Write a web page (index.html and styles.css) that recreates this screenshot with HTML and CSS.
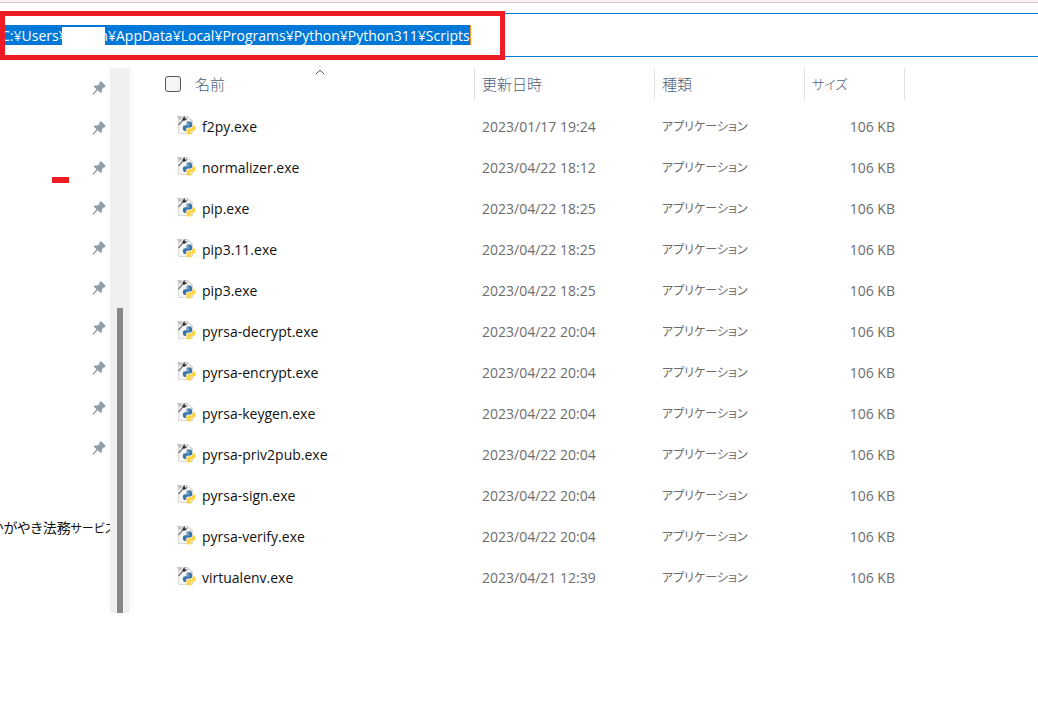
FILE: index.html
```html
<!DOCTYPE html>
<html lang="ja">
<head>
<meta charset="utf-8">
<meta name="viewport" content="width=device-width, initial-scale=1">
<title>Scripts</title>
<link rel="stylesheet" href="styles.css">
</head>
<body>
<svg class="defs" aria-hidden="true">
  <symbol id="pin" viewBox="0 0 14 14">
    <path d="M7.5 1 9 .3 13.7 4.8 13 6.3 11.6 6.4 10 8.3 9.8 11 8.8 12 5.7 9.3 1.7 13.4.6 13.6.8 12.5 4.6 8.2 1.7 5.4 2.7 4.3 5.5 4.4 7.5 2.7Z" fill="#929ea7"/>
  </symbol>
  <symbol id="pyexe" viewBox="0 0 20 20">
    <path d="M2.5 1.5H12L16.5 6V18.5H2.5Z" fill="#f5f5f5" stroke="#dadada"/>
    <path d="M11 1.5V6.5H16.5Z" fill="#fff" stroke="#c5c5c5" stroke-width=".8"/>
    <path d="M1 1H5L7 4 3 5Z" fill="#c4c4c4"/>
    <path d="M2.5 10 8 3.6" stroke="#777" stroke-width="1.3"/>
    <path d="M6.8 5.5C6.3 3.5 7.2 1.7 9.5 1.2L8.6 2.8 9.5 3.7 11 2.7C10.7 4.8 8.6 6.2 6.8 5.5Z" fill="#303030"/>
    <path d="M13 6.5C10.7 6.5 10.5 7.5 10.5 8.5V9.7H13.3V10.2H9.2C7.4 10.2 6.8 11.5 6.8 13.1S7.5 16 9 16H10V14.4C10 13.2 11 12.4 12.1 12.4H14.5C15.5 12.4 16 11.7 16 10.8V8.5C16 7.2 14.8 6.5 13 6.5Z" fill="#3977aa"/>
    <path d="M16.7 10.2V11.6C16.7 12.8 15.8 13.5 14.8 13.5H12.2C11.2 13.5 10.6 14.2 10.6 15.1V17.4C10.6 18.8 11.8 19.4 13.4 19.4S16.2 18.8 16.2 17.4V16.3H13.4V15.8H17.3C18.9 15.8 19.5 14.7 19.5 13S18.9 10.2 17.5 10.2Z" fill="#ffd43b"/>
    <circle cx="12" cy="8.1" r=".6" fill="#fff"/><circle cx="14.7" cy="17.8" r=".6" fill="#fff"/>
  </symbol>
</svg>
<header class="top">
  <div class="address">
    <input class="path" aria-label="アドレス" value="C:¥Users¥&#160;&#160;&#160;&#160;&#160;&#160;&#160;&#160;&#160;n¥AppData¥Local¥Programs¥Python¥Python311¥Scripts">
    <span class="mask"></span>
  </div>
  <span class="highlight"></span>
</header>
<main class="main">
  <nav class="side">
    <ul class="pins" id="pins"></ul>
    <span class="dash"></span>
    <div class="folder"><span>かがやき法務<span class="kana">サービス</span></span></div>
  </nav>
  <div class="track"><div class="thumb"></div></div>
  <section class="files">
    <table class="table">
      <colgroup><col class="c-name"><col class="c-date"><col class="c-type"><col class="c-size"></colgroup>
      <thead><tr>
        <th class="first"><div class="head"><input class="check" type="checkbox" aria-label="すべて選択"><button class="sort">名前</button></div>
          <svg class="arrow" viewBox="0 0 10 6"><path d="M.8 5.2 5 1 9.2 5.2" fill="none" stroke="#555"/></svg></th>
        <th><button class="sort">更新日時</button></th>
        <th><button class="sort">種類</button></th>
        <th><button class="sort narrow">サイズ</button></th>
      </tr></thead>
      <tbody id="rows"></tbody>
    </table>
  </section>
</main>
<script src="app.js"></script>
</body>
</html>
```
FILE: styles.css
```css
* { box-sizing: border-box; }
body {
  margin: 0;
  background: #fff;
  color: #111;
  font: 14px/20px "Open Sans", "Noto Sans CJK JP", sans-serif;
  font-feature-settings: "palt";
  overflow-x: hidden;
}
button, input { font: inherit; font-feature-settings: inherit; }
.defs { position: absolute; width: 0; height: 0; }

.top {
  position: relative;
  padding-top: 10px;
  border-top: 3px solid #d6c9c4;
}
.top::before {
  content: "";
  position: absolute;
  top: -3px;
  left: 0;
  right: 0;
  height: 2px;
  background: #f6f0ef;
}
.address {
  position: relative;
  display: flex;
  align-items: center;
  height: 44px;
  border: solid #0078d7;
  border-width: 1px 0;
}
.path {
  width: 471px;
  height: 20px;
  padding: 1px 0 0 1px;
  border: 0;
  border-right: 1px solid #ff8b1f;
  border-radius: 0;
  outline: 0;
  background: #0078d7;
  color: #fff;
}
.mask {
  position: absolute;
  left: 62px;
  top: 13px;
  width: 43px;
  height: 19px;
  background: #fff;
}
.highlight {
  position: absolute;
  left: 0;
  top: 8px;
  width: 505px;
  height: 49px;
  border: 5px solid #ed1c24;
}

.main { display: flex; padding-top: 11px; }
.side { position: relative; width: 110px; overflow: hidden; }
.pins { margin: 0; padding: 0 4px 0 0; list-style: none; }
.pins li {
  display: flex;
  justify-content: flex-end;
  align-items: center;
  height: 40px;
}
.pin { width: 14px; height: 14px; }
.dash {
  position: absolute;
  left: 52px;
  top: 109px;
  width: 17px;
  height: 6px;
  background: #ed1c24;
}
.folder {
  margin: 50px 0 0 -10px;
  white-space: nowrap;
}
.kana { font-size: 12px; }
.track {
  display: flex;
  justify-content: center;
  align-items: flex-end;
  width: 20px;
  height: 545px;
  background: #f0f0f0;
}
.thumb { width: 6px; height: 305px; background: #868686; }

.files { flex: 1; min-width: 0; margin-left: 2px; border-left: 1px solid #f7f7f7; }
.table { width: 772px; table-layout: fixed; border-collapse: separate; border-spacing: 0; }
.c-name { width: 342px; }
.c-date { width: 180px; }
.c-type { width: 150px; }
.c-size { width: 100px; }
th {
  position: relative;
  height: 32px;
  padding: 0 0 0 7px;
  border-right: 1px solid #e2e2e2;
  text-align: left;
  font-weight: 400;
}
.first { padding-left: 32px; }
.head { display: flex; align-items: center; gap: 14px; }
.sort {
  display: block;
  padding: 0;
  border: 0;
  background: none;
  color: #4c607a;
  font-size: 15px;
  font-weight: 300;
}
.narrow { font-size: 13px; }
.check {
  appearance: none;
  width: 16px;
  height: 16px;
  margin: 0;
  border: 1px solid #555;
  border-radius: 3px;
  background: #f5f5f5;
}
.arrow { position: absolute; left: 182px; top: 1px; width: 10px; height: 6px; }
tbody::before { content: ""; display: block; height: 6px; }
td { height: 41px; padding: 0 0 0 7px; color: #6d6d6d; }
.name { color: #111; }
.file { display: flex; align-items: center; gap: 6px; padding-left: 36px; }
.icon { width: 20px; height: 20px; margin-bottom: 3px; }
.type { font-size: 12px; }
.size { padding-right: 10px; text-align: right; }
```
FILE: app.js
```js
const files = [
  ["f2py.exe", "2023/01/17 19:24"],
  ["normalizer.exe", "2023/04/22 18:12"],
  ["pip.exe", "2023/04/22 18:25"],
  ["pip3.11.exe", "2023/04/22 18:25"],
  ["pip3.exe", "2023/04/22 18:25"],
  ["pyrsa-decrypt.exe", "2023/04/22 20:04"],
  ["pyrsa-encrypt.exe", "2023/04/22 20:04"],
  ["pyrsa-keygen.exe", "2023/04/22 20:04"],
  ["pyrsa-priv2pub.exe", "2023/04/22 20:04"],
  ["pyrsa-sign.exe", "2023/04/22 20:04"],
  ["pyrsa-verify.exe", "2023/04/22 20:04"],
  ["virtualenv.exe", "2023/04/21 12:39"]
];
document.getElementById("rows").innerHTML = files.map(([name, date]) =>
  `<tr><td class="name"><div class="file"><svg class="icon"><use href="#pyexe"/></svg><span>${name}</span></div></td><td>${date}</td><td class="type">アプリケーション</td><td class="size">106 KB</td></tr>`
).join("");
document.getElementById("pins").innerHTML =
  '<li><svg class="pin"><use href="#pin"/></svg></li>'.repeat(10);
```
